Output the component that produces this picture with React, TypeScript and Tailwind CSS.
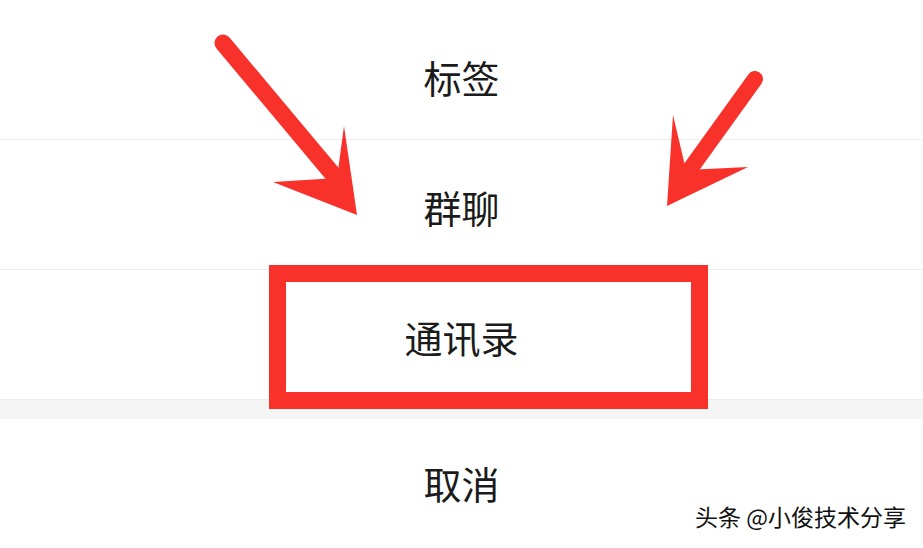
const rows = [
  { label: '标签', h: 'h-[140px] pt-[14px]' },
  { label: '群聊', h: 'h-[130px] pt-[4px]' },
  { label: '通讯录', h: 'h-[130px] pt-[4px]' },
];

export default function App() {
  return (
    <div
      className="relative w-[923px] h-[548px] overflow-hidden bg-white text-[#1b1b1b]"
      style={{ fontFamily: '"Noto Sans CJK SC", "Noto Sans", sans-serif' }}
    >
      <div className="flex flex-col">
        {rows.map((row) => (
          <div
            key={row.label}
            className={`${row.h} flex items-center justify-center border-b border-[#ececec] text-[38px] leading-none`}
          >
            {row.label}
          </div>
        ))}
        <div className="h-[19px] bg-[#f5f5f5]" />
        <div className="h-[130px] flex items-center justify-center text-[38px] leading-none pb-[2px]">
          取消
        </div>
      </div>

      {/* highlight box */}
      <div className="absolute left-[269px] top-[265px] w-[439px] h-[144px] border-[17px] border-[#f8322b]" />

      {/* arrows */}
      <svg className="absolute inset-0" width="923" height="548" viewBox="0 0 923 548">
        <g fill="#f8322b" stroke="none">
          <line x1="223" y1="43" x2="336" y2="178" stroke="#f8322b" strokeWidth="17" strokeLinecap="round" />
          <polygon points="357,215 344,126 337,178 273,182" />
          <line x1="755" y1="79" x2="688" y2="172" stroke="#f8322b" strokeWidth="16" strokeLinecap="round" />
          <polygon points="667,206 673,115 686,170 748,167" />
        </g>
      </svg>

      {/* watermark */}
      <div
        className="absolute right-[17px] top-[505px] text-[23px] leading-none text-[#111]"
        style={{ textShadow: '0 0 2px #fff, 0 0 2px #fff, 1px 1px 0 #fff, -1px -1px 0 #fff' }}
      >
        头条 @小俊技术分享
      </div>
    </div>
  );
}
